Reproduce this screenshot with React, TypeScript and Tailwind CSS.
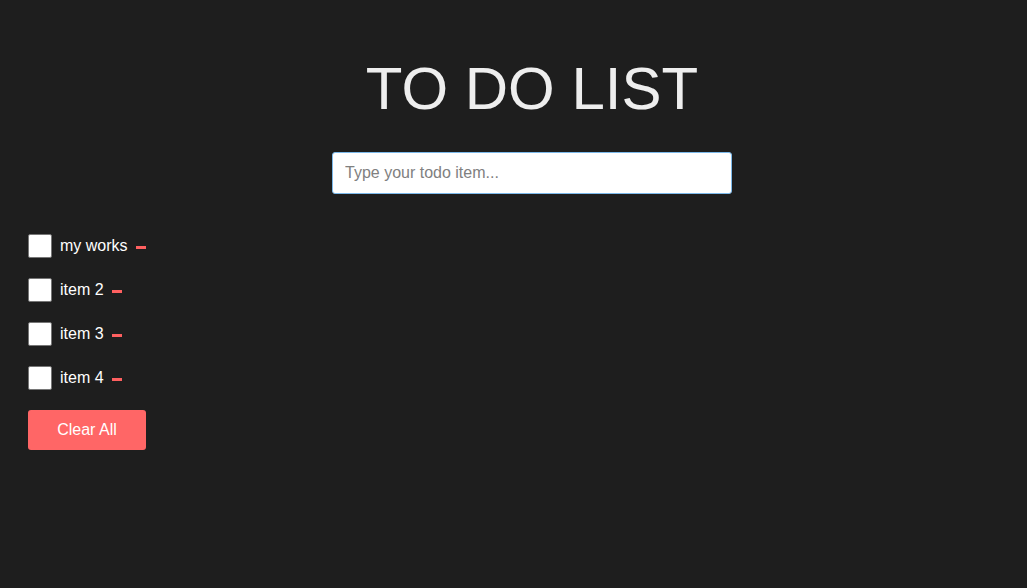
import { useState } from "react";

const INITIAL = ["my works", "item 2", "item 3", "item 4"];

export default function App() {
  const [items, setItems] = useState<string[]>(INITIAL);
  const [text, setText] = useState("");

  return (
    <div className="min-h-[588px] w-full bg-[#1e1e1e] font-['Liberation_Sans',Arial,sans-serif]">
      <div className="flex flex-col items-center pl-[37px] pt-[53px]">
        <h1 className="text-[60px] leading-[72px] font-normal text-[#eeeeee]">
          TO DO LIST
        </h1>
        <input
          value={text}
          onChange={(e) => setText(e.target.value)}
          onKeyDown={(e) => {
            if (e.key === "Enter" && text.trim()) {
              setItems((v) => [...v, text.trim()]);
              setText("");
            }
          }}
          placeholder="Type your todo item..."
          className="mt-[27px] h-[42px] w-[400px] rounded-[3px] border border-[#7cb9ea] bg-white px-3 text-base text-[#333] outline-none placeholder:text-[#808080]"
        />
      </div>

      <div className="mt-[40px] flex flex-col gap-5 px-7">
        {items.map((item, i) => (
          <div key={i} className="flex h-6 items-center gap-2">
            <span className="h-6 w-6 shrink-0 rounded-[2px] border border-[#767676] bg-white" />
            <span className="text-base text-white">{item}</span>
            <button
              onClick={() => setItems((v) => v.filter((_, j) => j !== i))}
              aria-label="Remove"
              className="mt-[2px] h-[3px] w-[10px] bg-[#ff6060]"
            />
          </div>
        ))}
        <button
          onClick={() => setItems([])}
          className="h-10 w-[118px] rounded-[3px] bg-[#ff6666] text-base text-white"
        >
          Clear All
        </button>
      </div>
    </div>
  );
}
